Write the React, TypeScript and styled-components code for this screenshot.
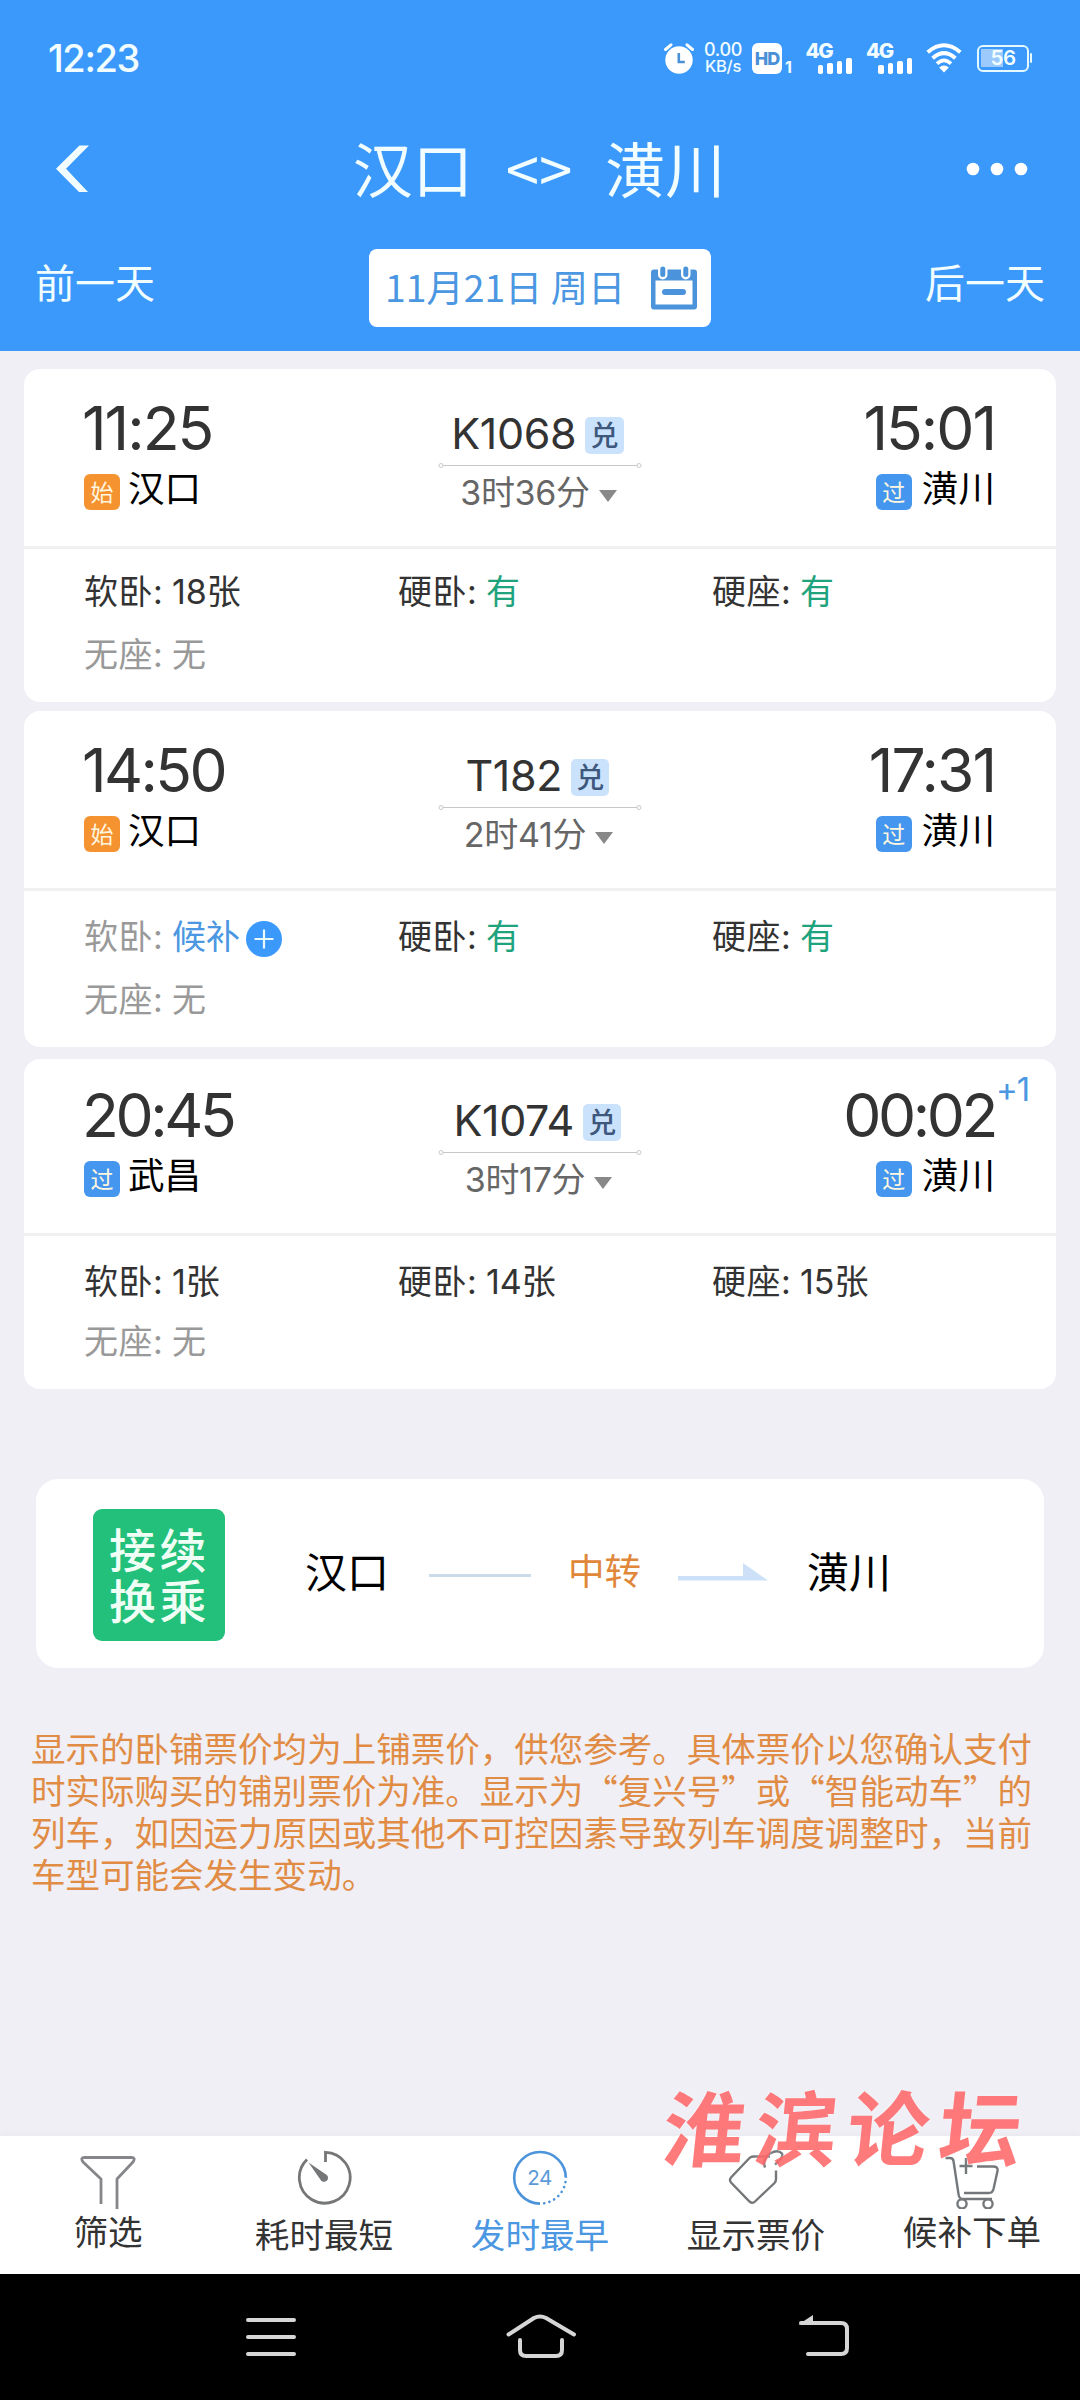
import React from "react";
import styled, { createGlobalStyle } from "styled-components";

const LATIN = `Inter, "Noto Sans CJK SC", sans-serif`;
const CJK = `"Noto Sans CJK SC", "Noto Sans", sans-serif`;
const BLUE = "#3b99fc";

const GlobalStyle = createGlobalStyle`
  * { box-sizing: border-box; }
  html, body { margin: 0; padding: 0; background: #f0eff5; }
  body { width: 1080px; height: 2400px; overflow: hidden; }
`;

const Screen = styled.div`
  position: relative;
  width: 1080px;
  height: 2400px;
  display: flex;
  flex-direction: column;
  background: #f0eff5;
  font-family: ${LATIN};
  white-space: nowrap;
`;

/* ---------- header ---------- */

const Header = styled.header`
  height: 351px;
  flex: none;
  background: ${BLUE};
  color: #f2fdff;
`;

const StatusBar = styled.div`
  height: 116px;
  padding: 0 51px 0 48px;
  display: flex;
  align-items: center;
  justify-content: space-between;
`;

const Clock = styled.span`
  font-size: 38px;
  line-height: 40px;
  font-weight: 500;
  letter-spacing: -1.4px;
`;

const StatusIcons = styled.div`
  display: flex;
  align-items: center;
  height: 34px;
`;

const Speed = styled.div`
  width: 38px;
  margin-left: 10px;
  display: flex;
  flex-direction: column;
  align-items: center;
  font-size: 18px;
  line-height: 17px;
  font-weight: 500;
  letter-spacing: -0.3px;
`;

const SpeedUnit = styled.span`
  font-size: 16.5px;
  line-height: 17px;
`;

const HdBadge = styled.div`
  width: 30px;
  height: 31px;
  margin-left: 10px;
  border-radius: 6px;
  background: #fff;
  color: #4a90d6;
  display: flex;
  align-items: center;
  justify-content: center;
  font-size: 18px;
  font-weight: 800;
  letter-spacing: -1px;
`;

const HdIndex = styled.span`
  width: 8px;
  margin-left: 3px;
  align-self: flex-end;
  font-size: 16px;
  line-height: 16px;
  font-weight: 700;
`;

const Signal = styled.div`
  width: 48px;
  height: 31px;
  margin-left: 12.5px;
  display: flex;
  flex-direction: column;
`;

const SignalName = styled.span`
  height: 15px;
  font-size: 20.5px;
  line-height: 15px;
  font-weight: 800;
  letter-spacing: -1.4px;
`;

const SignalBars = styled.div`
  display: flex;
  gap: 4px;
  align-items: flex-end;
  margin-left: 12px;
  height: 16px;
`;

const SignalBar = styled.i<{ $h: number }>`
  width: 5.6px;
  height: ${(p) => p.$h}px;
  border-radius: 1.8px;
  background: #fff;
`;

const WifiSvg = styled.svg`
  margin-left: 12px;
`;

const Battery = styled.div`
  position: relative;
  width: 52px;
  height: 27px;
  margin-left: 15px;
  border: 2.5px solid #e6f9ff;
  border-radius: 6px;
  display: flex;
  align-items: center;
  justify-content: center;
  font-size: 20.5px;
  line-height: 22px;
  font-weight: 600;
  letter-spacing: -0.6px;
  background: linear-gradient(#9ccafd, #9ccafd) 2px 2px / 22px 18px no-repeat;
  &::after {
    content: "";
    position: absolute;
    right: -5px;
    top: 6px;
    width: 2px;
    height: 10px;
    border-radius: 1px;
    background: #e6f9ff;
  }
`;

const TitleBar = styled.div`
  height: 106px;
  padding: 0 52px 0 54px;
  display: grid;
  grid-template-columns: 98px 1fr 102px;
  align-items: center;
`;

const Title = styled.h1`
  margin: -4px 0 0;
  display: flex;
  align-items: center;
  justify-content: center;
  gap: 33px;
  font-family: ${CJK};
  font-weight: 400;
  font-size: 60px;
  line-height: 64px;
  color: #f2fdff;
`;

const DotsSlot = styled.div`
  display: flex;
  justify-content: flex-end;
`;

const DayBar = styled.div`
  height: 129px;
  padding: 27px 35px 0;
  display: flex;
  justify-content: space-between;
  align-items: flex-start;
`;

const DayLink = styled.span`
  font-family: ${CJK};
  font-size: 40px;
  line-height: 64px;
  color: #f2fdff;
`;

const DateButton = styled.div`
  width: 342px;
  height: 78px;
  padding: 0 14px 0 16px;
  border-radius: 8px;
  background: #fff;
  color: #4b97e2;
  display: flex;
  align-items: center;
  justify-content: space-between;
  font-family: ${CJK};
  font-size: 37.3px;
`;

const DateText = styled.span`
  height: 78px;
  line-height: 75px;
`;

/* ---------- train list ---------- */

const List = styled.main`
  flex: 1;
  padding: 18px 24px 0;
`;

const Card = styled.section<{ $h: number; $gap: number }>`
  height: ${(p) => p.$h}px;
  margin-bottom: ${(p) => p.$gap}px;
  border-radius: 16px;
  background: #fff;
  display: flex;
  flex-direction: column;
`;

const Trip = styled.div<{ $compact: boolean }>`
  height: ${(p) => (p.$compact ? 177 : 180)}px;
  padding: ${(p) => (p.$compact ? 26 : 29)}px 61px 0 60px;
  border-bottom: 3px solid #f0eff2;
  display: grid;
  grid-template-columns: 1fr 204px 1fr;
`;

const Stop = styled.div<{ $end?: boolean }>`
  display: flex;
  flex-direction: column;
  align-items: ${(p) => (p.$end ? "flex-end" : "flex-start")};
`;

const Time = styled.div<{ $tracking: number }>`
  position: relative;
  margin-left: -2px;
  font-size: 60.5px;
  line-height: 61px;
  height: 60px;
  color: #333;
  letter-spacing: ${(p) => p.$tracking}px;
`;

const DayOffset = styled.span`
  position: absolute;
  left: 100%;
  top: -13px;
  margin-left: 1px;
  font-size: 33px;
  line-height: 34px;
  letter-spacing: -1px;
  color: #4b97e2;
`;

const Station = styled.div<{ $end?: boolean }>`
  height: 36px;
  margin-top: 16px;
  display: flex;
  gap: ${(p) => (p.$end ? 10 : 8)}px;
`;

const Tag = styled.span<{ $origin: boolean }>`
  width: 36px;
  height: 36px;
  border-radius: 6px;
  background: ${(p) => (p.$origin ? "#f59331" : "#4496ee")};
  color: #fff6e0;
  font-size: 23px;
  line-height: 38px;
  text-align: center;
`;

const StationName = styled.span`
  font-size: 36.6px;
  line-height: 31px;
  color: #000;
`;

const Middle = styled.div`
  padding-top: 19px;
  display: flex;
  flex-direction: column;
  align-items: center;
`;

const TrainRow = styled.div`
  height: 36px;
  margin-right: 4px;
  display: flex;
  gap: 9px;
`;

const TrainNo = styled.span`
  font-size: 43px;
  line-height: 32px;
  letter-spacing: -0.4px;
  color: #333;
`;

const Exchange = styled.span`
  width: 38.5px;
  height: 37px;
  border-radius: 5px;
  background: #cbe2fc;
  color: #3d587c;
  font-family: ${CJK};
  font-weight: 500;
  font-size: 28px;
  line-height: 35px;
  text-align: center;
`;

const Track = styled.svg`
  display: block;
  margin: 9px 0 6px;
`;

const Duration = styled.div`
  height: 36px;
  margin-right: 2px;
  display: flex;
  align-items: center;
  gap: 9px;
  font-size: 34px;
  line-height: 37px;
  letter-spacing: -0.3px;
  color: #666;
`;

const Caret = styled.i`
  margin-top: 8px;
  border: 9.5px solid transparent;
  border-top: 12px solid #888;
  border-bottom: 0;
`;

const Seats = styled.div<{ $first: number; $second: number }>`
  padding: ${(p) => p.$first}px 0 0 60px;
  display: grid;
  grid-template-columns: repeat(3, 314px);
  grid-template-rows: ${(p) => p.$second}px 40px;
`;

const SeatCell = styled.div<{ $dim?: boolean }>`
  height: 40px;
  display: flex;
  font-size: 34px;
  line-height: 42px;
  color: ${(p) => (p.$dim ? "#999" : "#333")};
`;

const SeatLabel = styled.span`
  width: 88px;
  letter-spacing: 0.5px;
`;

const SeatValue = styled.span<{ $tone: string }>`
  color: ${(p) => p.$tone};
`;

const PlusIcon = styled.svg`
  margin: 5px 0 0 6px;
`;

/* ---------- transfer ---------- */

const Transfer = styled.section`
  height: 189px;
  margin: 90px 12px 0;
  padding: 0 57px;
  border-radius: 22px;
  background: #fff;
  display: flex;
  align-items: flex-start;
`;

const TransferLogo = styled.div`
  width: 132px;
  height: 132px;
  margin-top: 30px;
  padding: 13px 0 0 16px;
  border-radius: 9px;
  background: #22c07a;
  color: #f0fff6;
  font-family: ${CJK};
  font-weight: 500;
  font-size: 47px;
  line-height: 51px;
  letter-spacing: 3.5px;
`;

const TransferRoute = styled.div`
  height: 60px;
  margin: 63px 0 0 80px;
  display: flex;
  align-items: center;
  font-size: 42px;
  line-height: 61px;
  color: #000;
`;

const RouteLine = styled.i`
  width: 102px;
  height: 3px;
  margin: 6px 37px 0 40px;
  background: #cbdbe9;
`;

const Via = styled.span`
  width: 74px;
  font-size: 36.6px;
  color: #e0873a;
`;

const RouteArrow = styled.svg`
  margin: 0 39px 0 36px;
`;

const Notice = styled.p`
  margin: 58px 0 0 7px;
  font-family: ${CJK};
  font-size: 34.53px;
  line-height: 42px;
  color: #e08c45;
  text-spacing-trim: space-all;
`;

/* ---------- bottom ---------- */

const TabBar = styled.nav`
  position: relative;
  flex: none;
  height: 138px;
  background: #fff;
  display: grid;
  grid-template-columns: repeat(5, 216px);
  box-shadow: 0 -3px 6px rgba(0, 0, 0, 0.025);
`;

const Tab = styled.div<{ $active?: boolean; $lift?: boolean }>`
  padding-top: 13px;
  display: flex;
  flex-direction: column;
  align-items: center;
  font-size: 34.6px;
  line-height: 40px;
  color: ${(p) => (p.$active ? "#4b97e2" : "#333")};
  & > span { margin-top: ${(p) => (p.$lift ? 3 : 10)}px; }
`;

const SystemNav = styled.div`
  flex: none;
  height: 126px;
  background: #000;
  display: flex;
  padding-left: 244px;
`;

const Watermark = styled.div`
  position: absolute;
  left: 664px;
  top: 2075px;
  display: flex;
  gap: 10px;
  font-family: ${CJK};
  font-size: 82px;
  line-height: 100px;
  font-weight: 700;
  color: rgba(255, 84, 86, 0.78);
  transform: skewX(-6deg);
  text-shadow: 0 0 3px rgba(255, 255, 255, 0.5);
`;

/* ---------- icons ---------- */

const AlarmIcon = () => (
  <svg width="30" height="31" viewBox="0 0 30 31">
    <circle cx="15" cy="17" r="13.7" fill="#fff" />
    <path d="M1.500 6.500 7 1.800M28.500 6.500 23 1.800" stroke="#fff" strokeWidth="3" strokeLinecap="round" />
    <path d="M14.800 10v9h6" stroke="#4a90d6" strokeWidth="2.6" fill="none" />
  </svg>
);

const WifiIcon = () => (
  <WifiSvg width="36" height="30" viewBox="0 0 36 30" fill="none" stroke="#fff" strokeWidth="4">
    <path d="M1.700 9.200Q18-4.600 34.300 9.200" />
    <path d="M6.600 15.200Q18 5.200 29.400 15.200" />
    <path d="M11 20.600Q18 14 25 20.600" strokeWidth="3.600" />
    <path d="M13.200 24.400Q18 20.400 22.800 24.400L18 29.400Z" fill="#fff" stroke="none" />
  </WifiSvg>
);

const BackIcon = () => (
  <svg width="40" height="50" viewBox="54 143 40 50">
    <path d="M79.500 144.500H89L66 167.800 88 191H79L56 167.800Z" fill="#f2fdff" />
  </svg>
);

const DotsIcon = () => (
  <svg width="62" height="14" viewBox="0 0 62 14" fill="#fff">
    <circle cx="7" cy="7" r="6.3" />
    <circle cx="31" cy="7" r="6.3" />
    <circle cx="55" cy="7" r="6.3" />
  </svg>
);

const CalendarIcon = () => (
  <svg width="46" height="44" viewBox="0 0 46 44">
    <rect x="0" y="3.500" width="46" height="40" rx="3" fill="#4b93da" />
    <rect x="4.500" y="14.500" width="37" height="24" fill="#fff" />
    <rect x="7" y="-1" width="9.500" height="14.500" rx="4.700" fill="#fff" />
    <rect x="30" y="-1" width="9.500" height="14.500" rx="4.700" fill="#fff" />
    <rect x="9.300" y="0.500" width="5" height="10.500" rx="2.500" fill="#4b93da" />
    <rect x="32.300" y="0.500" width="5" height="10.500" rx="2.500" fill="#4b93da" />
    <rect x="11" y="23" width="24" height="6" rx="3" fill="#4b93da" />
  </svg>
);

const FunnelIcon = () => (
  <svg width="56" height="60" viewBox="0 0 56 60" fill="none" stroke="#85868a" strokeWidth="2.800">
    <path d="M21 55V30L3 13Q0 8.500 4.500 8.500H51.500Q56 8.500 53 13L37 30V61" strokeLinejoin="round" />
  </svg>
);

const GaugeIcon = () => (
  <svg width="56" height="56" viewBox="0 0 56 56" fill="none" stroke="#757678" strokeWidth="2.800">
    <path d="M29.500 13V3.300A25.400 25.400 0 1 1 11 10.500" />
    <path d="M12.500 13.500 30.800 26A4 4 0 1 1 25 31.500Z" fill="#757678" stroke="none" />
  </svg>
);

const HoursIcon = () => (
  <svg width="56" height="56" viewBox="0 0 56 56" fill="none" stroke="#4b93da" strokeWidth="2.600">
    <path d="M28 54.600A25.800 25.800 0 1 1 53.800 28.800" />
    <path d="M53.500 33A25.800 25.800 0 0 1 30 54.500" strokeDasharray="0.100 5.200" strokeLinecap="round" />
    <text x="27.500" y="36" textAnchor="middle" fontSize="20.500" letterSpacing="-0.400" fill="#5b9bd8" stroke="none" fontFamily="Inter, sans-serif">24</text>
  </svg>
);

const PriceTagIcon = () => (
  <svg width="56" height="56" viewBox="0 0 56 56" fill="none" stroke="#75787b" strokeWidth="2.400">
    <path d="M42 7.500H25.500Q23 7.500 21.500 9L3 28.500Q1 31 3 33.500L21.500 52.500Q24.500 55 27 52.500L46.500 34Q48 32.500 48 30V21.500" />
    <path d="M37 18.500Q34 9.500 42 4.500Q50 0 54 4.500Q56 8.500 47 15.500" />
  </svg>
);

const CartIcon = () => (
  <svg width="56" height="60" viewBox="0 0 56 60" fill="none" stroke="#75787b" strokeWidth="2.400">
    <path d="M1.500 9H6Q9 9 9.500 12L14.500 45Q15 50 19 50H48" />
    <path d="M33 17.500H49Q54.500 17.500 53.500 22L49.500 40Q48.500 44 45 44H20" />
    <path d="M22 9V25M15.500 17H28.500" />
    <circle cx="18" cy="54.800" r="4.600" />
    <circle cx="44" cy="54.800" r="4.600" />
  </svg>
);

const SystemIcons = () => (
  <svg width="610" height="126" viewBox="244 0 610 126" fill="none" stroke="#d6d6d6" strokeWidth="4" strokeLinecap="round" strokeLinejoin="round">
    <path d="M248 46H294M248 63H294M248 80H294" />
    <path d="M508.500 60.500 534 44Q540 40.800 546 44L574 60.500" />
    <path d="M520 66V76Q520 82 526 82H556Q562 82 562 76V66" />
    <path d="M801 49H841Q847 49 847 55V74Q847 80 841 80H808" />
    <path d="M798.500 50.500 813 41V50.500Z" fill="#d6d6d6" stroke="none" />
  </svg>
);

/* ---------- data ---------- */

type Seat = { name: string; value: string; state: "count" | "plenty" | "none" | "waitlist" };
type Train = {
  no: string;
  duration: string;
  from: { time: string; name: string; origin: boolean };
  to: { time: string; name: string; nextDay?: boolean };
  seats: Seat[];
  height: number;
  gap: number;
  compact: boolean;
  first: number;
  second: number;
};

const trains: Train[] = [
  {
    no: "K1068", duration: "3时36分",
    from: { time: "11:25", name: "汉口", origin: true },
    to: { time: "15:01", name: "潢川" },
    seats: [
      { name: "软卧", value: "18张", state: "count" },
      { name: "硬卧", value: "有", state: "plenty" },
      { name: "硬座", value: "有", state: "plenty" },
      { name: "无座", value: "无", state: "none" },
    ],
    height: 333, gap: 9, compact: false, first: 22, second: 63,
  },
  {
    no: "T182", duration: "2时41分",
    from: { time: "14:50", name: "汉口", origin: true },
    to: { time: "17:31", name: "潢川" },
    seats: [
      { name: "软卧", value: "候补", state: "waitlist" },
      { name: "硬卧", value: "有", state: "plenty" },
      { name: "硬座", value: "有", state: "plenty" },
      { name: "无座", value: "无", state: "none" },
    ],
    height: 336, gap: 12, compact: false, first: 25, second: 63,
  },
  {
    no: "K1074", duration: "3时17分",
    from: { time: "20:45", name: "武昌", origin: false },
    to: { time: "00:02", name: "潢川", nextDay: true },
    seats: [
      { name: "软卧", value: "1张", state: "count" },
      { name: "硬卧", value: "14张", state: "count" },
      { name: "硬座", value: "15张", state: "count" },
      { name: "无座", value: "无", state: "none" },
    ],
    height: 330, gap: 0, compact: true, first: 25, second: 60,
  },
];

const tones = { count: "#333", plenty: "#1fa37d", none: "#999", waitlist: "#4b97e2" };

// Wide digits are set tighter than the narrow "1".
const tracking = (time: string) => [-3.4, -2.6, -2][time.split("1").length - 1];

const TrainCard = ({ train }: { train: Train }) => (
  <Card $h={train.height} $gap={train.gap}>
    <Trip $compact={train.compact}>
      <Stop>
        <Time $tracking={tracking(train.from.time)}>{train.from.time}</Time>
        <Station>
          <Tag $origin={train.from.origin}>{train.from.origin ? "始" : "过"}</Tag>
          <StationName>{train.from.name}</StationName>
        </Station>
      </Stop>
      <Middle>
        <TrainRow>
          <TrainNo>{train.no}</TrainNo>
          <Exchange>兑</Exchange>
        </TrainRow>
        <Track width="204" height="6" viewBox="0 0 204 6" fill="#fff" stroke="#c8c8c8">
          <path d="M5 3.500H199" strokeWidth="1" />
          <circle cx="3" cy="3.500" r="2" />
          <circle cx="201" cy="3.500" r="2" />
        </Track>
        <Duration>
          {train.duration}
          <Caret />
        </Duration>
      </Middle>
      <Stop $end>
        <Time $tracking={tracking(train.to.time)}>
          {train.to.time}
          {train.to.nextDay && <DayOffset>+1</DayOffset>}
        </Time>
        <Station $end>
          <Tag $origin={false}>过</Tag>
          <StationName>{train.to.name}</StationName>
        </Station>
      </Stop>
    </Trip>
    <Seats $first={train.first} $second={train.second}>
      {train.seats.map((s) => (
        <SeatCell key={s.name} $dim={s.state === "none" || s.state === "waitlist"}>
          <SeatLabel>{s.name}:</SeatLabel>
          <SeatValue $tone={tones[s.state]}>{s.value}</SeatValue>
          {s.state === "waitlist" && (
            <PlusIcon width="36" height="36" viewBox="0 0 36 36">
              <circle cx="18" cy="18" r="18" fill={BLUE} />
              <path d="M8.500 18H27.500M18 8.500V27.500" stroke="#e8f9ff" strokeWidth="2.200" />
            </PlusIcon>
          )}
        </SeatCell>
      ))}
    </Seats>
  </Card>
);

const SignalIcon = () => (
  <Signal>
    <SignalName>4G</SignalName>
    <SignalBars>
      {[9, 11, 13, 16].map((h) => (
        <SignalBar key={h} $h={h} />
      ))}
    </SignalBars>
  </Signal>
);

export default function App() {
  return (
    <Screen>
      <GlobalStyle />
      <Header>
        <StatusBar>
          <Clock>12:23</Clock>
          <StatusIcons>
            <AlarmIcon />
            <Speed>
              0.00
              <SpeedUnit>KB/s</SpeedUnit>
            </Speed>
            <HdBadge>HD</HdBadge>
            <HdIndex>1</HdIndex>
            <SignalIcon />
            <SignalIcon />
            <WifiIcon />
            <Battery>56</Battery>
          </StatusIcons>
        </StatusBar>
        <TitleBar>
          <BackIcon />
          <Title>
            <span>汉口</span>
            <span>&lt;&gt;</span>
            <span>潢川</span>
          </Title>
          <DotsSlot>
            <DotsIcon />
          </DotsSlot>
        </TitleBar>
        <DayBar>
          <DayLink>前一天</DayLink>
          <DateButton>
            <DateText>11月21日 周日</DateText>
            <CalendarIcon />
          </DateButton>
          <DayLink>后一天</DayLink>
        </DayBar>
      </Header>

      <List>
        {trains.map((t) => (
          <TrainCard key={t.no} train={t} />
        ))}
        <Transfer>
          <TransferLogo>
            接续
            <br />
            换乘
          </TransferLogo>
          <TransferRoute>
            <span>汉口</span>
            <RouteLine />
            <Via>中转</Via>
            <RouteArrow width="90" height="18" viewBox="0 0 90 18" fill="#cce1f8">
              <path d="M0 13H65V0L90 17.500H0Z" />
            </RouteArrow>
            <span>潢川</span>
          </TransferRoute>
        </Transfer>
        <Notice>
          显示的卧铺票价均为上铺票价，供您参考。具体票价以您确认支付
          <br />
          时实际购买的铺别票价为准。显示为“复兴号”或“智能动车”的
          <br />
          列车，如因运力原因或其他不可控因素导致列车调度调整时，当前
          <br />
          车型可能会发生变动。
        </Notice>
      </List>

      <TabBar>
        <Tab $lift>
          <FunnelIcon />
          <span>筛选</span>
        </Tab>
        <Tab>
          <GaugeIcon />
          <span>耗时最短</span>
        </Tab>
        <Tab $active>
          <HoursIcon />
          <span>发时最早</span>
        </Tab>
        <Tab>
          <PriceTagIcon />
          <span>显示票价</span>
        </Tab>
        <Tab $lift>
          <CartIcon />
          <span>候补下单</span>
        </Tab>
      </TabBar>
      <SystemNav>
        <SystemIcons />
      </SystemNav>
      <Watermark>
        <span>淮</span>
        <span>滨</span>
        <span>论</span>
        <span>坛</span>
      </Watermark>
    </Screen>
  );
}
